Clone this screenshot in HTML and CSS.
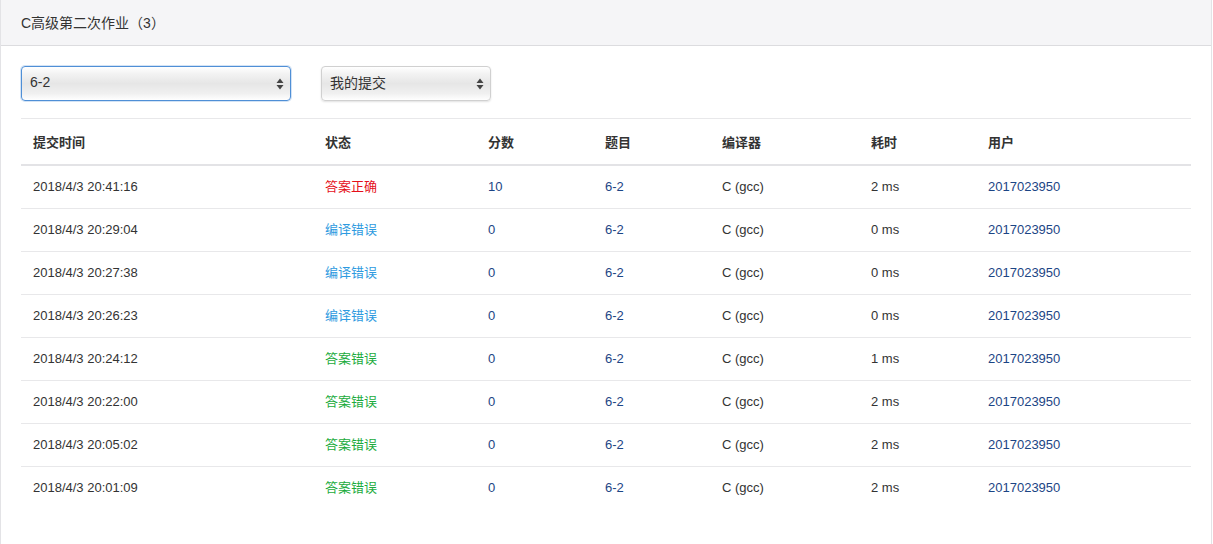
FILE: index.html
```html
<!DOCTYPE html>
<html lang="zh">
<head>
<meta charset="utf-8">
<title>C高级第二次作业（3）</title>
<link rel="stylesheet" href="styles.css">
</head>
<body>
<div class="card">
  <div class="card-header">C高级第二次作业（3）</div>
  <div class="card-body">
    <div class="filters">
      <div class="select focused" style="width:270px">
        <span class="select-text">6-2</span>
        <svg class="arrows" width="8" height="12" viewBox="0 0 8 12"><path d="M4 0.5L7.5 5H0.5Z M4 11.5L7.5 7H0.5Z" fill="#444"/></svg>
      </div>
      <div class="select" style="width:170px">
        <span class="select-text">我的提交</span>
        <svg class="arrows" width="8" height="12" viewBox="0 0 8 12"><path d="M4 0.5L7.5 5H0.5Z M4 11.5L7.5 7H0.5Z" fill="#444"/></svg>
      </div>
    </div>
    <table class="table">
      <colgroup>
        <col style="width:292px"><col style="width:163px"><col style="width:117px"><col style="width:117px"><col style="width:149px"><col style="width:117px"><col>
      </colgroup>
      <thead>
        <tr><th>提交时间</th><th>状态</th><th>分数</th><th>题目</th><th>编译器</th><th>耗时</th><th>用户</th></tr>
      </thead>
      <tbody>
        <tr><td>2018/4/3 20:41:16</td><td class="st-ok">答案正确</td><td><a>10</a></td><td><a>6-2</a></td><td>C (gcc)</td><td>2 ms</td><td><a>2017023950</a></td></tr>
        <tr><td>2018/4/3 20:29:04</td><td class="st-ce">编译错误</td><td><a>0</a></td><td><a>6-2</a></td><td>C (gcc)</td><td>0 ms</td><td><a>2017023950</a></td></tr>
        <tr><td>2018/4/3 20:27:38</td><td class="st-ce">编译错误</td><td><a>0</a></td><td><a>6-2</a></td><td>C (gcc)</td><td>0 ms</td><td><a>2017023950</a></td></tr>
        <tr><td>2018/4/3 20:26:23</td><td class="st-ce">编译错误</td><td><a>0</a></td><td><a>6-2</a></td><td>C (gcc)</td><td>0 ms</td><td><a>2017023950</a></td></tr>
        <tr><td>2018/4/3 20:24:12</td><td class="st-wa">答案错误</td><td><a>0</a></td><td><a>6-2</a></td><td>C (gcc)</td><td>1 ms</td><td><a>2017023950</a></td></tr>
        <tr><td>2018/4/3 20:22:00</td><td class="st-wa">答案错误</td><td><a>0</a></td><td><a>6-2</a></td><td>C (gcc)</td><td>2 ms</td><td><a>2017023950</a></td></tr>
        <tr><td>2018/4/3 20:05:02</td><td class="st-wa">答案错误</td><td><a>0</a></td><td><a>6-2</a></td><td>C (gcc)</td><td>2 ms</td><td><a>2017023950</a></td></tr>
        <tr><td>2018/4/3 20:01:09</td><td class="st-wa">答案错误</td><td><a>0</a></td><td><a>6-2</a></td><td>C (gcc)</td><td>2 ms</td><td><a>2017023950</a></td></tr>
      </tbody>
    </table>
  </div>
</div>
</body>
</html>
```
FILE: styles.css
```css
* { box-sizing: border-box; }
html, body { margin: 0; padding: 0; background: #fff; }
body {
  font-family: "Liberation Sans", "Noto Sans CJK SC", sans-serif;
  font-size: 13px;
  color: #333;
}
.card {
  width: 1212px;
  min-height: 100vh;
  border: 1px solid #e3e3e6;
  border-top: none;
  border-bottom: none;
  background: #fff;
}
.card-header {
  height: 46px;
  background: #f5f5f7;
  border-bottom: 1px solid #dcdcdf;
  padding: 0 20px 2px 20px;
  display: flex;
  align-items: center;
  font-size: 14px;
  color: #333;
}
.card-body {
  padding: 20px 20px 0 20px;
}
.filters {
  display: flex;
  gap: 30px;
  margin-bottom: 17px;
}
.select {
  position: relative;
  height: 35px;
  border-radius: 4px;
  border: 1px solid #d0d0d0;
  background: linear-gradient(to bottom, #ffffff 0%, #f3f3f3 20%, #e6e6e6 50%, #f0f0f0 80%, #ffffff 100%);
  box-shadow: 0 1px 2px rgba(0,0,0,0.12);
  display: flex;
  align-items: center;
  padding: 0 0 3px 8px;
  font-size: 14px;
  color: #333;
}
.select.focused {
  border: 1px solid #4f8fd6;
  box-shadow: 0 0 0 1px rgba(79,143,214,0.25);
}
.arrows {
  position: absolute;
  right: 6px;
  top: 11px;
}
.table {
  width: 1170px;
  border-collapse: collapse;
  table-layout: fixed;
}
.table th, .table td {
  text-align: left;
  padding: 12px 12px;
  line-height: 18px;
  border-top: 1px solid #e8e8ea;
  white-space: nowrap;
}
.table th {
  font-weight: bold;
  color: #333;
  padding-top: 15px;
  padding-bottom: 12px;
  border-bottom: 2px solid #e3e3e6;
}
.table tbody tr:first-child td { border-top: none; }
.table a { color: #1c4585; text-decoration: none; }
.st-ok { color: #e50f1a; }
.st-ce { color: #2d9ae0; }
.st-wa { color: #1aab3c; }
```
